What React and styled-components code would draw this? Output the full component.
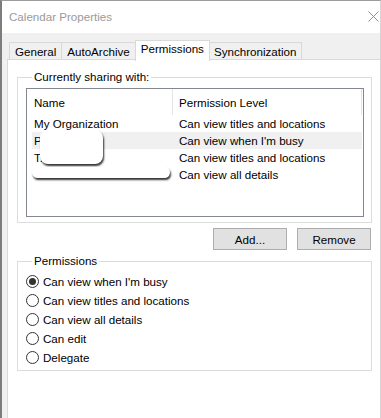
import React from "react";
import styled, { createGlobalStyle } from "styled-components";

const GlobalStyle = createGlobalStyle`
  html, body {
    margin: 0;
    padding: 0;
    background: #f0f0f0;
  }
  body {
    font-family: "Liberation Sans", Arial, sans-serif;
    font-size: 11.6px;
    color: #000;
  }
`;

const Window = styled.div`
  width: 381px;
  height: 418px;
  box-sizing: border-box;
  display: flex;
  flex-direction: column;
  border-top: 1px solid #9c9c9c;
  border-left: 2px solid #7d7d7d;
  border-right: 1px solid #d4d4d4;
  background: #f0f0f0;
  overflow: hidden;
`;

const TitleBar = styled.div`
  height: 31px;
  flex: none;
  display: flex;
  align-items: center;
  justify-content: space-between;
  padding: 0 1px 1px 7px;
  background: #fff;
  color: #9a9a9a;
  font-size: 11.6px;
`;

const Body = styled.div`
  flex: 1;
  display: flex;
  flex-direction: column;
  padding: 6px 0 0 5px;
`;

const TabRow = styled.div`
  display: flex;
  align-items: flex-end;
  height: 21px;
  padding-left: 2px;
  position: relative;
  z-index: 1;
`;

const Tab = styled.div`
  box-sizing: border-box;
  height: ${(p) => (p.$active ? "21px" : "18px")};
  padding: ${(p) => (p.$active ? "1px 5px 0" : "0 5px")};
  margin: ${(p) => (p.$active ? "0 -1px -1px -1px" : "0")};
  display: flex;
  align-items: ${(p) => (p.$active ? "flex-start" : "center")};
  background: ${(p) => (p.$active ? "#fff" : "#f0f0f0")};
  border: 1px solid #d9d9d9;
  border-bottom: ${(p) => (p.$active ? "none" : "1px solid #d9d9d9")};
  border-left: ${(p) => (p.$first || p.$active ? "1px solid #d9d9d9" : "none")};
  position: relative;
  z-index: ${(p) => (p.$active ? 2 : 1)};
  white-space: nowrap;
`;

const Panel = styled.div`
  flex: 1;
  background: #fff;
  border: 1px solid #d9d9d9;
  border-right: none;
  border-bottom: none;
  margin-top: -1px;
  padding: 9px 8px 0 9px;
`;

const Group = styled.fieldset`
  margin: 0;
  border: 1px solid #dcdcdc;
  padding: ${(p) => p.$pad};
  min-inline-size: 0;
`;

const Legend = styled.legend`
  padding: 0 2px;
  margin-left: 6px;
  line-height: 16px;
`;

const ListBox = styled.div`
  position: relative;
  height: 129px;
  box-sizing: border-box;
  border: 1px solid #828790;
  background: #fff;
`;

const HeaderRow = styled.div`
  display: grid;
  grid-template-columns: 146px 189px;
  height: 26px;
`;

const HeaderCell = styled.div`
  display: flex;
  align-items: center;
  padding-left: ${(p) => p.$pad};
  border-right: 1px solid #e5e5e5;
`;

const Row = styled.div`
  display: grid;
  grid-template-columns: 147px 1fr;
  height: 17px;
  margin: 0 1px 0 5px;
  align-items: center;
  background: ${(p) => (p.$selected ? "#f0f0f0" : "transparent")};
  span:first-child {
    padding-left: 2px;
  }
`;

const Redact = styled.div`
  position: absolute;
  left: ${(p) => p.$x}px;
  top: ${(p) => p.$y}px;
  width: ${(p) => p.$w}px;
  height: ${(p) => p.$h}px;
  background: #fff;
  border-radius: ${(p) => p.$r}px;
  box-shadow: 1px 2px 2px rgba(0, 0, 0, 0.8);
`;

const ButtonRow = styled.div`
  display: flex;
  justify-content: flex-end;
  gap: 10px;
  margin: 5px 1px 3px 0;
`;

const Button = styled.button`
  width: 74px;
  height: 22px;
  box-sizing: border-box;
  background: #e1e1e1;
  border: 1px solid #adadad;
  font-family: inherit;
  font-size: 11.6px;
  color: #000;
  padding: 0;
`;

const RadioList = styled.div`
  display: flex;
  flex-direction: column;
`;

const RadioItem = styled.label`
  display: flex;
  align-items: center;
  gap: 4px;
  height: 19px;
`;

const Circle = styled.span`
  width: 13px;
  height: 13px;
  box-sizing: border-box;
  border-radius: 50%;
  border: 1px solid #333;
  display: flex;
  align-items: center;
  justify-content: center;
  &::after {
    content: "";
    width: 7px;
    height: 7px;
    border-radius: 50%;
    background: ${(p) => (p.$checked ? "#333" : "transparent")};
  }
`;

const rows = [
  { name: "My Organization", level: "Can view titles and locations" },
  { name: "P", level: "Can view when I'm busy", selected: true },
  { name: "T.", level: "Can view titles and locations" },
  { name: "", level: "Can view all details" },
];

const options = [
  "Can view when I'm busy",
  "Can view titles and locations",
  "Can view all details",
  "Can edit",
  "Delegate",
];

export default function App() {
  return (
    <>
      <GlobalStyle />
      <Window>
        <TitleBar>
          <span>Calendar Properties</span>
          <svg width="11" height="11" viewBox="0 0 11 11">
            <path d="M0.5 0.5 L10.5 10.5 M10.5 0.5 L0.5 10.5" stroke="#8c8c8c" strokeWidth="1" />
          </svg>
        </TitleBar>
        <Body>
          <TabRow>
            <Tab $first>General</Tab>
            <Tab>AutoArchive</Tab>
            <Tab $active>Permissions</Tab>
            <Tab>Synchronization</Tab>
          </TabRow>
          <Panel>
            <Group $pad="3px 7px 5px 8px">
              <Legend>Currently sharing with:</Legend>
              <ListBox>
                <HeaderRow>
                  <HeaderCell $pad="7px">Name</HeaderCell>
                  <HeaderCell $pad="6px">Permission Level</HeaderCell>
                </HeaderRow>
                {rows.map((r, i) => (
                  <Row key={i} $selected={r.selected}>
                    <span>{r.name}</span>
                    <span>{r.level}</span>
                  </Row>
                ))}
                <Redact $x={13} $y={41} $w={63} $h={34} $r={8} />
                <Redact $x={5} $y={78} $w={138} $h={11} $r={6} />
              </ListBox>
            </Group>
            <ButtonRow>
              <Button>Add...</Button>
              <Button>Remove</Button>
            </ButtonRow>
            <Group $pad="3px 7px 3px 8px">
              <Legend>Permissions</Legend>
              <RadioList>
                {options.map((o, i) => (
                  <RadioItem key={o}>
                    <Circle $checked={i === 0} />
                    {o}
                  </RadioItem>
                ))}
              </RadioList>
            </Group>
          </Panel>
        </Body>
      </Window>
    </>
  );
}
